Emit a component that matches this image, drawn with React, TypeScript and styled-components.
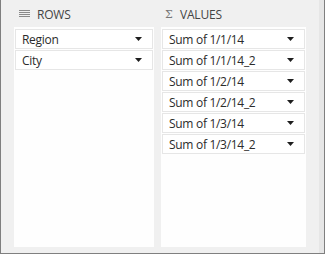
import React from 'react';
import styled, {createGlobalStyle} from "styled-components";

const GlobalStyle = createGlobalStyle`
  html, body {
    margin: 0;
    padding: 0;
    background: #f0f0f0;
  }
  * {
    box-sizing: border-box;
  }
`

const rows = ["Region", "City"]
const values = ["Sum of 1/1/14", "Sum of 1/1/14_2", "Sum of 1/2/14", "Sum of 1/2/14_2", "Sum of 1/3/14", "Sum of 1/3/14_2"]

function Caret() {
    return (
        <CaretIcon width="7" height="4" viewBox="0 0 7 4">
            <path d="M0 0H7L3.5 4Z" fill="#1e1e1e"/>
        </CaretIcon>
    )
}

function RowsIcon() {
    return (
        <svg width="11" height="8" viewBox="0 0 11 8">
            <rect x="0" y="0" width="11" height="1" fill="#8a8a8a"/>
            <rect x="0" y="2" width="11" height="1" fill="#8a8a8a"/>
            <rect x="0" y="4" width="11" height="1" fill="#8a8a8a"/>
            <rect x="0" y="6" width="11" height="1" fill="#8a8a8a"/>
        </svg>
    )
}

export default function App() {
    return (
        <>
            <GlobalStyle/>
            <Frame>
                <Columns>
                    <Section $width={140}>
                        <Header>
                            <IconSlot><RowsIcon/></IconSlot>
                            <Title>ROWS</Title>
                        </Header>
                        <Panel>
                            {rows.map((r) => (
                                <Field key={r}>
                                    <span>{r}</span>
                                    <Caret/>
                                </Field>
                            ))}
                        </Panel>
                    </Section>
                    <Section $width={145}>
                        <Header>
                            <Sigma>Σ</Sigma>
                            <Title>VALUES</Title>
                        </Header>
                        <Panel>
                            {values.map((v) => (
                                <Field key={v}>
                                    <span>{v}</span>
                                    <Caret/>
                                </Field>
                            ))}
                        </Panel>
                    </Section>
                </Columns>
                <Track/>
            </Frame>
        </>
    );
}

const Frame = styled.div`
  width: 325px;
  height: 254px;
  display: flex;
  background: #f0f0f0;
  border: 1px solid #7f7f7f;
  border-top: none;
  font-family: "Open Sans", "Noto Sans", sans-serif;
`

const Columns = styled.div`
  flex: 1;
  display: flex;
  gap: 7px;
  padding: 0 0 6px 13px;
`

const Section = styled.div<{ $width: number }>`
  width: ${(p) => p.$width}px;
  display: flex;
  flex-direction: column;
`

const Header = styled.div`
  height: 27px;
  display: flex;
  align-items: center;
  padding-top: 1px;
`

const IconSlot = styled.span`
  display: flex;
  margin-left: 5px;
  width: 18px;
`

const Sigma = styled.span`
  width: 15px;
  margin-left: 4px;
  font-family: "DejaVu Serif", serif;
  font-size: 11px;
  color: #777;
`

const Title = styled.span`
  font-size: 12px;
  color: #444;
  letter-spacing: -0.2px;
`

const Panel = styled.div`
  flex: 1;
  background: #fefefe;
  display: flex;
  flex-direction: column;
  gap: 1px;
  padding: 2px 1px;
`

const Field = styled.div`
  height: 20px;
  display: flex;
  align-items: center;
  justify-content: space-between;
  padding: 0 10px 0 6px;
  border: 1px solid #e6e6e6;
  background: #fff;
  font-size: 12px;
  color: #2b2b2b;
  letter-spacing: -0.3px;
`

const CaretIcon = styled.svg`
  flex-shrink: 0;
`

const Track = styled.div`
  width: 5px;
  background: #e6e6e6;
`
